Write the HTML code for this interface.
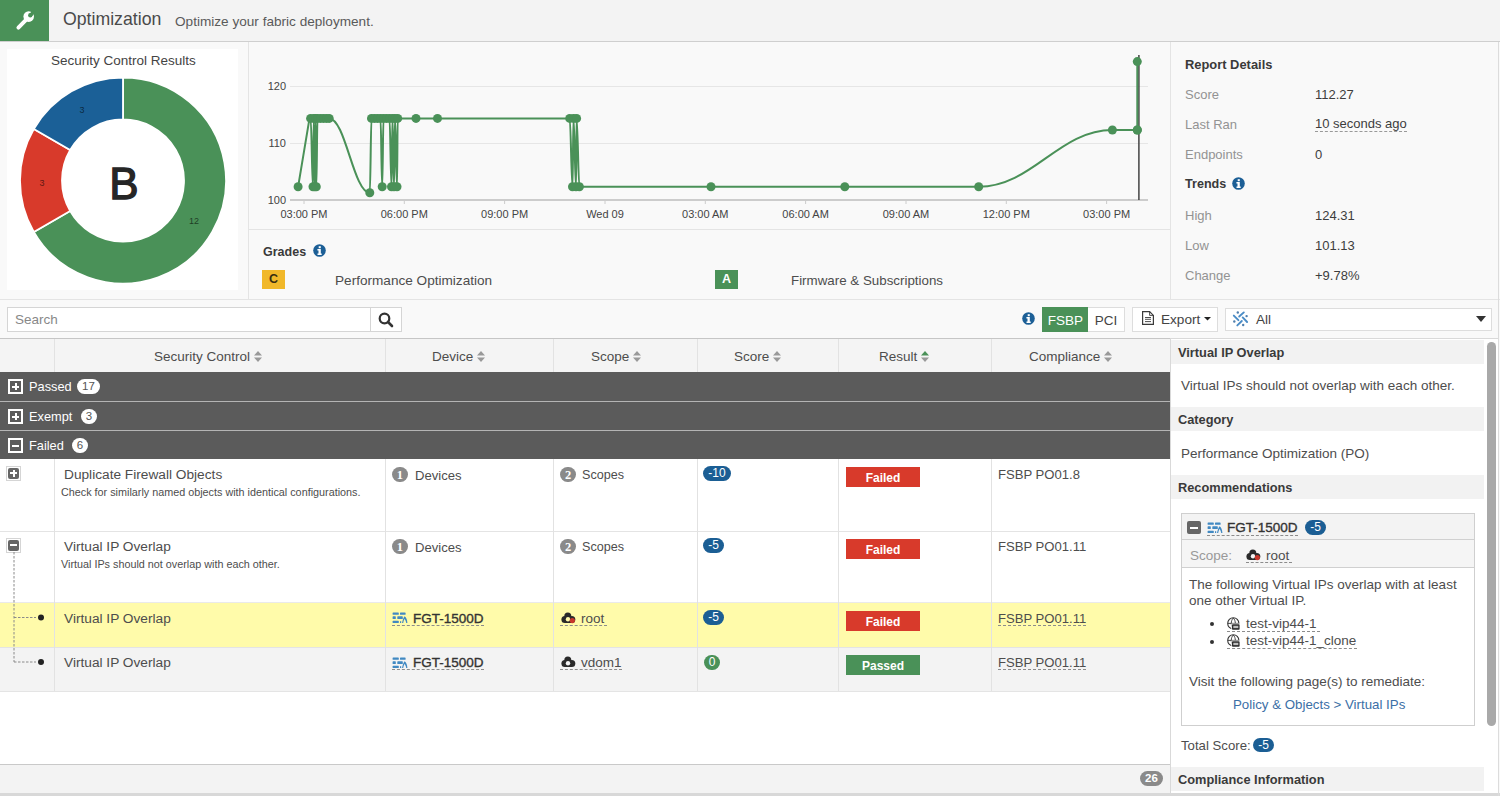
<!DOCTYPE html>
<html><head><meta charset="utf-8">
<style>
*{box-sizing:border-box;margin:0;padding:0}
html,body{width:1500px;height:796px;overflow:hidden;background:#f9f9f9;font-family:"Liberation Sans",sans-serif;color:#333}
.a{position:absolute}
#hdr{left:0;top:0;width:1500px;height:42px;background:#f3f3f3;border-bottom:1px solid #cfcfcf}
#hicon{left:0;top:0;width:49px;height:41px;background:#4a9158}
#htitle{left:63px;top:9px;font-size:17.7px;color:#4a4a4a}
#hsub{left:175px;top:14px;font-size:13.6px;color:#5a5a5a}
#donutcard{left:7px;top:49px;width:231px;height:241px;background:#fff}
#chartp{left:248px;top:42px;width:922px;height:188px;border-left:1px solid #e4e4e4;border-bottom:1px solid #e4e4e4}
#rep{left:1170px;top:42px;width:328px;height:257px;border-left:1px solid #e4e4e4}
.lbl{font-size:13px;color:#939393}
.val{font-size:13px;color:#3d3d3d}
.bold{font-weight:bold}
.info{width:13px;height:13px;border-radius:50%;background:#1b5e94;color:#fff;font-weight:bold;font-size:10px;line-height:13px;text-align:center;font-family:"Liberation Serif",serif}
.info::after{content:"i"}
.grade{width:23px;height:19px;font-size:12.5px;font-weight:bold;line-height:19px;text-align:center}
.t{font-size:13.5px;color:#4d4d4d;white-space:nowrap}
.btn{border:1px solid #ddd;background:#fff}
.sort{display:inline-block;width:8px;height:11px;vertical-align:-1px;margin-left:4px}
.grp{left:0;width:1170px;height:28px;background:#5b5b5b;color:#fff}
.gbox{position:absolute;left:8px;top:7px;width:15px;height:15px;border:2px solid #fff}
.gbox::before{content:"";position:absolute;left:2px;top:4.5px;width:7px;height:2px;background:#fff}
.gbox.p::after{content:"";position:absolute;left:4.5px;top:2px;width:2px;height:7px;background:#fff}
.gtxt{position:absolute;left:29px;top:7px;font-size:12.8px;color:#fff}
.gbadge{position:absolute;top:7px;height:15px;border-radius:8px;background:#fff;color:#555;font-size:11.5px;line-height:15px;text-align:center}
.vl{width:1px;background:#e2e2e2}
.ebox{width:15px;height:15px;border:1px solid #d5d5d5;background:#fff}
.ebox::before{content:"";position:absolute;left:1px;top:1px;width:11px;height:11px;background:#666;border-radius:2px}
.ebox i{position:absolute;left:3px;top:5.2px;width:7px;height:2.2px;background:#fff}
.ebox b{position:absolute;left:5.5px;top:3px;width:2.2px;height:7px;background:#fff}
.circ{width:15.5px;height:15.5px;border-radius:50%;background:#8a8a8a;color:#fff;font-size:12.5px;font-weight:bold;font-family:"Liberation Serif",serif;line-height:16.5px;text-align:center}
.pill{height:15px;border-radius:7.5px;background:#1b5e94;color:#fff;font-size:12px;line-height:15px;text-align:center}
.res{width:74px;height:20px;color:#fff;font-size:12px;font-weight:bold;line-height:23px;text-align:center}
.dash{border-bottom:1px dashed #8c8c8c}
.sh{position:absolute;left:1171px;width:313px;height:24px;background:#f2f2f2;font-size:12.8px;font-weight:bold;color:#3a3a3a;padding-left:7px;padding-top:1px;line-height:24px}
</style></head>
<body>
<div id="hdr" class="a"></div>
<div id="hicon" class="a"></div>
<div id="htitle" class="a">Optimization</div>
<div id="hsub" class="a">Optimize your fabric deployment.</div>
<div id="donutcard" class="a"></div>
<svg class="a" style="left:0;top:0" width="250" height="300" viewBox="0 0 250 300">
<path fill="#4a9158" stroke="#fff" stroke-width="1.8" d="M123.00,77.50 A103,103 0 1 1 33.80,232.00 L70.17,211.00 A61,61 0 1 0 123.00,119.50 Z"/>
<path fill="#d83a2b" stroke="#fff" stroke-width="1.8" d="M33.80,232.00 A103,103 0 0 1 33.80,129.00 L70.17,150.00 A61,61 0 0 0 70.17,211.00 Z"/>
<path fill="#1b6097" stroke="#fff" stroke-width="1.8" d="M33.80,129.00 A103,103 0 0 1 123.00,77.50 L123.00,119.50 A61,61 0 0 0 70.17,150.00 Z"/>
<text x="82" y="113" font-size="9" fill="rgba(0,0,0,0.6)" text-anchor="middle">3</text>
<text x="42" y="186" font-size="9" fill="rgba(0,0,0,0.6)" text-anchor="middle">3</text>
<text x="194" y="224" font-size="9" fill="rgba(0,0,0,0.6)" text-anchor="middle">12</text>
<text x="124" y="198.6" font-size="44" fill="#262626" stroke="#262626" stroke-width="1.3" text-anchor="middle">B</text>
</svg>
<div id="chartp" class="a"></div>
<svg class="a" style="left:0;top:0" width="1170" height="230" viewBox="0 0 1170 230">
<g stroke="#e6e6e6" stroke-width="1">
<line x1="290" y1="86.5" x2="1148" y2="86.5"/><line x1="290" y1="143.5" x2="1148" y2="143.5"/>
</g>
<line x1="290" y1="200" x2="1148" y2="200" stroke="#ccc" stroke-width="2"/>
<g stroke="#ccc" stroke-width="1">
<line x1="304" y1="200" x2="304" y2="204"/><line x1="404.3" y1="200" x2="404.3" y2="204"/><line x1="504.6" y1="200" x2="504.6" y2="204"/><line x1="605" y1="200" x2="605" y2="204"/><line x1="705.3" y1="200" x2="705.3" y2="204"/><line x1="805.6" y1="200" x2="805.6" y2="204"/><line x1="906" y1="200" x2="906" y2="204"/><line x1="1006.3" y1="200" x2="1006.3" y2="204"/><line x1="1106.6" y1="200" x2="1106.6" y2="204"/>
</g>
<g font-size="11" fill="#444" text-anchor="end">
<text x="286" y="90">120</text><text x="286" y="147">110</text><text x="286" y="204">100</text>
</g>
<g font-size="11" fill="#444" text-anchor="middle">
<text x="304" y="218">03:00 PM</text><text x="404.3" y="218">06:00 PM</text><text x="504.6" y="218">09:00 PM</text><text x="605" y="218">Wed 09</text><text x="705.3" y="218">03:00 AM</text><text x="805.6" y="218">06:00 AM</text><text x="906" y="218">09:00 AM</text><text x="1006.3" y="218">12:00 PM</text><text x="1106.6" y="218">03:00 PM</text>
</g>
<line x1="1138.9" y1="55" x2="1138.9" y2="200" stroke="#444" stroke-width="1.5"/>
<path fill="none" stroke="#4a9158" stroke-width="2" d="M298.1,186.8 L309.5,118.4 L310.6,118.4 C311.6,118.4 312.0,186.8 313.0,186.8 C313.3,186.8 313.5,118.4 313.8,118.4 C314.2,118.4 314.4,186.8 314.8,186.8 C315.1,186.8 315.3,118.4 315.6,118.4 C315.9,118.4 316.0,186.8 316.3,186.8 C316.8,186.8 317.0,118.4 317.5,118.4 C318.7,118.4 319.3,118.4 320.5,118.4 C321.7,118.4 322.3,118.4 323.5,118.4 C324.7,118.4 325.3,118.4 326.5,118.4 C327.6,118.4 328.1,118.4 329.2,118.4 C345.4,118.4 353.6,192.8 369.8,192.8 C370.5,192.8 370.8,118.4 371.5,118.4 C372.7,118.4 373.3,118.4 374.5,118.4 C375.7,118.4 376.3,118.4 377.5,118.4 C378.7,118.4 379.3,118.4 380.5,118.4 C381.2,118.4 381.5,186.8 382.2,186.8 C382.7,186.8 383.0,118.4 383.5,118.4 C384.7,118.4 385.3,118.4 386.5,118.4 C387.7,118.4 388.3,118.4 389.5,118.4 C390.3,118.4 390.7,186.8 391.5,186.8 C391.9,186.8 392.1,118.4 392.5,118.4 C393.1,118.4 393.4,186.8 394.0,186.8 C394.4,186.8 394.6,118.4 395.0,118.4 C395.8,118.4 396.2,186.8 397.0,186.8 C397.3,186.8 397.4,118.4 397.7,118.4 C405.0,118.4 408.7,118.4 416.0,118.4 C424.6,118.4 428.9,118.4 437.5,118.4 C490.4,118.4 516.8,118.4 569.7,118.4 C570.8,118.4 571.4,186.8 572.5,186.8 C572.9,186.8 573.1,118.4 573.5,118.4 C574.5,118.4 575.0,186.8 576.0,186.8 C576.2,186.8 576.4,118.4 576.6,118.4 C577.7,118.4 578.3,186.8 579.4,186.8 C632.0,186.8 658.4,186.8 711.0,186.8 C764.5,186.8 791.3,186.8 844.8,186.8 C898.4,186.8 925.1,186.8 978.7,186.8 C1032.2,186.8 1058.9,130.0 1112.4,130.0 C1122.4,130.0 1127.3,130.0 1137.3,130.0 C1137.3,130.0 1137.3,89.0 1137.3,61.6 C1137.3,89.0 1137.3,130.0 1137.3,130.0"/>
<g fill="#4a9158"><circle cx="298.1" cy="186.8" r="4.5"/><circle cx="310.6" cy="118.4" r="4.5"/><circle cx="313.0" cy="186.8" r="4.5"/><circle cx="313.8" cy="118.4" r="4.5"/><circle cx="314.8" cy="186.8" r="4.5"/><circle cx="315.6" cy="118.4" r="4.5"/><circle cx="316.3" cy="186.8" r="4.5"/><circle cx="317.5" cy="118.4" r="4.5"/><circle cx="320.5" cy="118.4" r="4.5"/><circle cx="323.5" cy="118.4" r="4.5"/><circle cx="326.5" cy="118.4" r="4.5"/><circle cx="329.2" cy="118.4" r="4.5"/><circle cx="369.8" cy="192.8" r="4.5"/><circle cx="371.5" cy="118.4" r="4.5"/><circle cx="374.5" cy="118.4" r="4.5"/><circle cx="377.5" cy="118.4" r="4.5"/><circle cx="380.5" cy="118.4" r="4.5"/><circle cx="382.2" cy="186.8" r="4.5"/><circle cx="383.5" cy="118.4" r="4.5"/><circle cx="386.5" cy="118.4" r="4.5"/><circle cx="389.5" cy="118.4" r="4.5"/><circle cx="391.5" cy="186.8" r="4.5"/><circle cx="392.5" cy="118.4" r="4.5"/><circle cx="394.0" cy="186.8" r="4.5"/><circle cx="395.0" cy="118.4" r="4.5"/><circle cx="397.0" cy="186.8" r="4.5"/><circle cx="397.7" cy="118.4" r="4.5"/><circle cx="416.0" cy="118.4" r="4.5"/><circle cx="437.5" cy="118.4" r="4.5"/><circle cx="569.7" cy="118.4" r="4.5"/><circle cx="572.5" cy="186.8" r="4.5"/><circle cx="573.5" cy="118.4" r="4.5"/><circle cx="576.0" cy="186.8" r="4.5"/><circle cx="576.6" cy="118.4" r="4.5"/><circle cx="579.4" cy="186.8" r="4.5"/><circle cx="711.0" cy="186.8" r="4.5"/><circle cx="844.8" cy="186.8" r="4.5"/><circle cx="978.7" cy="186.8" r="4.5"/><circle cx="1112.4" cy="130.0" r="4.5"/><circle cx="1137.3" cy="130.0" r="4.5"/><circle cx="1137.3" cy="61.6" r="4.5"/><circle cx="1137.3" cy="130.0" r="4.5"/></g>
</svg>
<div id="rep" class="a"></div>
<svg class="a" style="left:0;top:0" width="49" height="41" viewBox="0 0 49 41"><line x1="18.4" y1="27.6" x2="26" y2="19.8" stroke="#fff" stroke-width="3.9" stroke-linecap="round"/><circle cx="28.7" cy="16.6" r="5.3" fill="#fff"/><circle cx="30.3" cy="15.2" r="2.2" fill="#4a9158"/><path d="M29.2 14.2L32.6 10.2L35.5 12.6L31.6 16.4Z" fill="#4a9158"/></svg>
<div class="a" style="left:51px;top:53px;font-size:13.5px;color:#444">Security Control Results</div>
<div class="a bold" style="left:1185px;top:57px;font-size:12.9px;color:#3a3a3a">Report Details</div>
<div class="a lbl" style="left:1185px;top:87px">Score</div><div class="a val" style="left:1315px;top:87px">112.27</div>
<div class="a lbl" style="left:1185px;top:117px">Last Ran</div><div class="a val" style="left:1315px;top:117px;border-bottom:1px dashed #999;line-height:14px">10 seconds ago</div>
<div class="a lbl" style="left:1185px;top:147px">Endpoints</div><div class="a val" style="left:1315px;top:147px">0</div>
<div class="a bold" style="left:1185px;top:177px;font-size:12.6px;color:#3a3a3a">Trends</div>
<svg class="a" style="left:1232px;top:176.5px" width="13" height="13" viewBox="0 0 13 13"><circle cx="6.5" cy="6.5" r="6.3" fill="#1c5f96"/><rect x="5.7" y="2.2" width="2.1" height="2" fill="#fff"/><path d="M4.4 5.1H7.8V9.5H8.7V10.9H4.5V9.5H5.5V6.4H4.4Z" fill="#fff"/></svg>
<div class="a lbl" style="left:1185px;top:208px">High</div><div class="a val" style="left:1315px;top:208px">124.31</div>
<div class="a lbl" style="left:1185px;top:238px">Low</div><div class="a val" style="left:1315px;top:238px">101.13</div>
<div class="a lbl" style="left:1185px;top:268px">Change</div><div class="a val" style="left:1315px;top:268px">+9.78%</div>
<div class="a" style="left:248px;top:229px;width:922px;height:70px;border-left:1px solid #e4e4e4"></div>
<div class="a bold" style="left:263px;top:245px;font-size:12.5px;color:#3a3a3a">Grades</div>
<svg class="a" style="left:312.6px;top:244px" width="13" height="13" viewBox="0 0 13 13"><circle cx="6.5" cy="6.5" r="6.3" fill="#1c5f96"/><rect x="5.7" y="2.2" width="2.1" height="2" fill="#fff"/><path d="M4.4 5.1H7.8V9.5H8.7V10.9H4.5V9.5H5.5V6.4H4.4Z" fill="#fff"/></svg>
<div class="a grade" style="left:262px;top:270px;background:#f1b82a;color:#3a2e10">C</div>
<div class="a" style="left:335px;top:273px;font-size:13.6px;color:#4d4d4d">Performance Optimization</div>
<div class="a grade" style="left:715px;top:270px;background:#4a9158;color:#fff">A</div>
<div class="a" style="left:791px;top:273px;font-size:13.35px;color:#4d4d4d">Firmware &amp; Subscriptions</div>
<div class="a" style="left:0;top:299px;width:1500px;height:1px;background:#e4e4e4"></div>


<!-- toolbar -->
<div class="a" style="left:7px;top:307px;width:364px;height:25px;background:#fff;border:1px solid #d5d5d5"></div>
<div class="a t" style="left:15px;top:312px;color:#888">Search</div>
<div class="a" style="left:370px;top:307px;width:32px;height:25px;background:#fff;border:1px solid #d5d5d5"></div>
<svg class="a" style="left:378px;top:312px" width="16" height="16" viewBox="0 0 16 16"><circle cx="6.5" cy="6.5" r="4.8" fill="none" stroke="#333" stroke-width="2.2"/><path d="M10 10L14 14" stroke="#333" stroke-width="2.6" stroke-linecap="round"/></svg>
<svg class="a" style="left:1021.5px;top:311.8px" width="13" height="13" viewBox="0 0 13 13"><circle cx="6.5" cy="6.5" r="6.3" fill="#1c5f96"/><rect x="5.7" y="2.2" width="2.1" height="2" fill="#fff"/><path d="M4.4 5.1H7.8V9.5H8.7V10.9H4.5V9.5H5.5V6.4H4.4Z" fill="#fff"/></svg>
<div class="a" style="left:1042px;top:307px;width:47px;height:25px;background:#4a9158;color:#fff;font-size:13.5px;line-height:27px;text-align:center">FSBP</div>
<div class="a" style="left:1088px;top:307px;width:37px;height:25px;background:#fff;border:1px solid #ddd;border-left:0;color:#444;font-size:13.5px;line-height:25px;text-align:center">PCI</div>
<div class="a" style="left:1132px;top:307px;width:86px;height:25px;background:#fff;border:1px solid #ddd"></div>
<svg class="a" style="left:1136px;top:306px" width="24" height="24" viewBox="0 0 24 24"><path d="M6.6 5.6H13.6L17.4 9.4V18.3H6.6Z" fill="none" stroke="#3a3a3a" stroke-width="1.2"/><path d="M13.6 5.6V9.4H17.4" fill="none" stroke="#3a3a3a" stroke-width="0.9"/><path d="M9 11.5H15M9 13.3H15M9 15.6H15" stroke="#3a3a3a" stroke-width="0.9"/></svg>
<div class="a t" style="left:1161px;top:312px;color:#444;font-size:13.6px">Export</div>
<svg class="a" style="left:1203.5px;top:317px" width="8" height="5" viewBox="0 0 8 5"><path d="M0 0H7L3.5 3.5Z" fill="#222"/></svg>
<div class="a" style="left:1225px;top:308px;width:267px;height:23px;background:#fff;border:1px solid #ddd"></div>
<svg class="a" style="left:1226px;top:306px" width="30" height="26" viewBox="0 0 30 26"><g stroke="#4a8cc6" stroke-width="1.9" stroke-linecap="round" fill="none"><path d="M7.8 9.6L12.4 14.2M13.2 10.5L17.8 6.4M16.7 11.4L21.1 16M11.3 19.4L15.8 15"/></g><g fill="#4f7fae"><circle cx="11.8" cy="6.5" r="1.2"/><circle cx="20.6" cy="10.1" r="1.2"/><circle cx="8.3" cy="15.5" r="1.2"/><circle cx="17.2" cy="19" r="1.2"/></g></svg>
<div class="a t" style="left:1256px;top:312px;color:#444">All</div>
<svg class="a" style="left:1476px;top:316px" width="10" height="6" viewBox="0 0 10 6"><path d="M0 0H10L5 6Z" fill="#333"/></svg>

<!-- table -->
<div class="a" style="left:0;top:338px;width:1170px;height:34px;background:#f4f4f4;border-top:1px solid #c6c6c6"></div>
<div class="a vl" style="left:54px;top:339px;height:33px"></div>
<div class="a vl" style="left:385px;top:339px;height:33px"></div>
<div class="a vl" style="left:553px;top:339px;height:33px"></div>
<div class="a vl" style="left:697px;top:339px;height:33px"></div>
<div class="a vl" style="left:838px;top:339px;height:33px"></div>
<div class="a vl" style="left:991px;top:339px;height:33px"></div>
<div class="a t" style="left:154px;top:349px">Security Control<svg class="sort" viewBox="0 0 8 11"><path fill="#999" d="M4 0L8 4.5H0Z M4 11L8 6.5H0Z"/></svg></div>
<div class="a t" style="left:432px;top:349px">Device<svg class="sort" viewBox="0 0 8 11"><path fill="#999" d="M4 0L8 4.5H0Z M4 11L8 6.5H0Z"/></svg></div>
<div class="a t" style="left:591px;top:349px">Scope<svg class="sort" viewBox="0 0 8 11"><path fill="#999" d="M4 0L8 4.5H0Z M4 11L8 6.5H0Z"/></svg></div>
<div class="a t" style="left:734px;top:349px">Score<svg class="sort" viewBox="0 0 8 11"><path fill="#999" d="M4 0L8 4.5H0Z M4 11L8 6.5H0Z"/></svg></div>
<div class="a t" style="left:879px;top:349px">Result<svg class="sort" viewBox="0 0 8 11"><path fill="#4a9158" d="M4 0L8 4.5H0Z"/><path fill="#999" d="M4 11L8 6.5H0Z"/></svg></div>
<div class="a t" style="left:1029px;top:349px">Compliance<svg class="sort" viewBox="0 0 8 11"><path fill="#999" d="M4 0L8 4.5H0Z M4 11L8 6.5H0Z"/></svg></div>

<div class="a grp" style="top:372px;height:29px"><div class="gbox p"></div><div class="gtxt">Passed</div><div class="gbadge" style="left:77px;width:23px">17</div></div>
<div class="a" style="left:0;top:401px;width:1170px;height:1px;background:#b4b4b4"></div>
<div class="a grp" style="top:402px"><div class="gbox p"></div><div class="gtxt">Exempt</div><div class="gbadge" style="left:81px;width:16px">3</div></div>
<div class="a" style="left:0;top:430px;width:1170px;height:1px;background:#b4b4b4"></div>
<div class="a grp" style="top:431px"><div class="gbox"></div><div class="gtxt">Failed</div><div class="gbadge" style="left:72px;width:16px">6</div></div>

<!-- rows -->
<div class="a" style="left:0;top:459px;width:1170px;height:305px;background:#fff"></div>
<div class="a" style="left:0;top:602px;width:1170px;height:45px;background:#fffbaa"></div>
<div class="a" style="left:0;top:647px;width:1170px;height:44px;background:#f3f3f3"></div>
<div class="a" style="left:0;top:531px;width:1170px;height:1px;background:#e4e4e4"></div>
<div class="a" style="left:0;top:602px;width:1170px;height:1px;background:#eaeaea"></div>
<div class="a" style="left:0;top:647px;width:1170px;height:1px;background:#e4e4e4"></div>
<div class="a" style="left:0;top:691px;width:1170px;height:1px;background:#e4e4e4"></div>
<div class="a vl" style="left:54px;top:459px;height:232px"></div>
<div class="a vl" style="left:385px;top:459px;height:232px"></div>
<div class="a vl" style="left:553px;top:459px;height:232px"></div>
<div class="a vl" style="left:697px;top:459px;height:232px"></div>
<div class="a vl" style="left:838px;top:459px;height:232px"></div>
<div class="a vl" style="left:991px;top:459px;height:232px"></div>

<div class="a ebox" style="left:6px;top:466px"><i></i><b></b></div>
<div class="a t" style="left:64px;top:467px;font-size:13.7px">Duplicate Firewall Objects</div>
<div class="a t" style="left:61px;top:486px;font-size:10.8px">Check for similarly named objects with identical configurations.</div>
<div class="a circ" style="left:392px;top:466.8px">1</div><div class="a t" style="left:415px;top:468px;font-size:13.1px">Devices</div>
<div class="a circ" style="left:560.3px;top:466.8px">2</div><div class="a t" style="left:582px;top:468px;font-size:12.6px">Scopes</div>
<div class="a pill" style="left:703px;top:466px;width:28px">-10</div>
<div class="a res" style="left:846px;top:467px;background:#d83a2b">Failed</div>
<div class="a t" style="left:998px;top:467px;font-size:13.1px">FSBP PO01.8</div>

<div class="a ebox" style="left:6px;top:538px"><i></i></div>
<div class="a t" style="left:64px;top:539px;font-size:13.7px">Virtual IP Overlap</div>
<div class="a t" style="left:61px;top:558px;font-size:10.8px">Virtual IPs should not overlap with each other.</div>
<div class="a circ" style="left:392px;top:538.8px">1</div><div class="a t" style="left:415px;top:540px;font-size:13.1px">Devices</div>
<div class="a circ" style="left:560.3px;top:538.8px">2</div><div class="a t" style="left:582px;top:540px;font-size:12.6px">Scopes</div>
<div class="a pill" style="left:703px;top:538px;width:21px">-5</div>
<div class="a res" style="left:846px;top:539px;background:#d83a2b">Failed</div>
<div class="a t" style="left:998px;top:539px;font-size:13.1px">FSBP PO01.11</div>

<svg class="a" style="left:0;top:552px" width="54" height="115" viewBox="0 0 54 115"><g stroke="#8a8a8a" stroke-width="1" stroke-dasharray="2.5 1.5" fill="none"><path d="M14 0V110M14 65.5H36M14 110H36"/></g><circle cx="41" cy="65.5" r="3" fill="#222"/><circle cx="41" cy="110" r="3" fill="#222"/></svg>
<div class="a t" style="left:64px;top:611px;font-size:13.7px">Virtual IP Overlap</div>
<svg class="a fw" style="left:392px;top:612px" width="16" height="12" viewBox="0 0 16 12"><g fill="#4189c2"><rect x="0.6" y="0.4" width="6.2" height="2.4" rx="0.6"/><rect x="8" y="0.4" width="5.6" height="2.4" rx="0.6"/><rect x="0.6" y="4.3" width="3.2" height="2.7" rx="0.6"/><rect x="5.3" y="4.3" width="5.5" height="2.7" rx="0.6"/><rect x="0.6" y="8.8" width="6.2" height="2.3" rx="0.6"/><rect x="8" y="9.2" width="1.2" height="1.8"/><path d="M10 10.9C10.6 8.2 11.4 5.8 12.6 4.3C14.2 5 15.2 7.8 15.4 10.9H14.2C13.8 8.8 13.2 7.6 12.4 7C11.8 8.2 11.4 9.6 11.2 10.9Z"/></g></svg>
<div class="a t dash" style="left:392px;top:611px;width:92px;height:15px"></div>
<div class="a t" style="left:413px;top:611px;color:#333;font-size:13.5px;-webkit-text-stroke:0.35px #333">FGT-1500D</div>
<svg class="a" style="left:561px;top:612px" width="16" height="12" viewBox="0 0 16 12"><g fill="#2a2a2a"><circle cx="6.8" cy="4" r="3.5"/><circle cx="3.9" cy="7.5" r="3.5"/><circle cx="10.8" cy="7.4" r="3.5"/><rect x="3.9" y="7" width="6.9" height="4"/></g><circle cx="7" cy="7.3" r="2.2" fill="#fffbaa"/><circle cx="11.3" cy="8.6" r="2.6" fill="#c8372c"/></svg>
<div class="a t dash" style="left:560px;top:611px;width:47px;height:15px"></div>
<div class="a t" style="left:581px;top:611px">root</div>
<div class="a pill" style="left:703px;top:610px;width:21px">-5</div>
<div class="a res" style="left:846px;top:611px;background:#d83a2b">Failed</div>
<div class="a t dash" style="left:998px;top:611px;height:15px;font-size:13.1px">FSBP PO01.11</div>

<div class="a t" style="left:64px;top:655px;font-size:13.7px">Virtual IP Overlap</div>
<svg class="a fw" style="left:392px;top:657px" width="16" height="12" viewBox="0 0 16 12"><g fill="#4189c2"><rect x="0.6" y="0.4" width="6.2" height="2.4" rx="0.6"/><rect x="8" y="0.4" width="5.6" height="2.4" rx="0.6"/><rect x="0.6" y="4.3" width="3.2" height="2.7" rx="0.6"/><rect x="5.3" y="4.3" width="5.5" height="2.7" rx="0.6"/><rect x="0.6" y="8.8" width="6.2" height="2.3" rx="0.6"/><rect x="8" y="9.2" width="1.2" height="1.8"/><path d="M10 10.9C10.6 8.2 11.4 5.8 12.6 4.3C14.2 5 15.2 7.8 15.4 10.9H14.2C13.8 8.8 13.2 7.6 12.4 7C11.8 8.2 11.4 9.6 11.2 10.9Z"/></g></svg>
<div class="a t dash" style="left:392px;top:655px;width:92px;height:15px"></div>
<div class="a t" style="left:413px;top:655px;color:#333;font-size:13.5px;-webkit-text-stroke:0.35px #333">FGT-1500D</div>
<svg class="a" style="left:561px;top:656px" width="16" height="12" viewBox="0 0 16 12"><g fill="#2a2a2a"><circle cx="6.8" cy="4" r="3.5"/><circle cx="3.9" cy="7.5" r="3.5"/><circle cx="10.8" cy="7.4" r="3.5"/><rect x="3.9" y="7" width="6.9" height="4"/></g><circle cx="7" cy="7.3" r="2.2" fill="#f3f3f3"/></svg>
<div class="a t dash" style="left:560px;top:655px;width:62px;height:15px"></div>
<div class="a t" style="left:581px;top:655px">vdom1</div>
<div class="a pill" style="left:704px;top:655px;width:16px;background:#4a9158">0</div>
<div class="a res" style="left:846px;top:655px;background:#4a9158">Passed</div>
<div class="a t dash" style="left:998px;top:655px;height:15px;font-size:13.1px">FSBP PO01.11</div>

<!-- footer -->
<div class="a" style="left:0;top:764px;width:1170px;height:30px;background:#f3f3f3;border-top:1px solid #c9c9c9"></div>
<div class="a" style="left:0;top:793px;width:1500px;height:3px;background:#d8d8d8"></div>
<div class="a pill" style="left:1140px;top:771px;width:23px;height:15px;border-radius:8px;background:#8a8a8a;line-height:15px;font-weight:bold;font-size:11.5px">26</div>

<!-- right panel -->
<div class="a" style="left:1170px;top:338px;width:328px;height:455px;background:#fff;border-left:1px solid #d9d9d9;border-top:1px solid #d9d9d9"></div>
<div class="a" style="left:1487px;top:342px;width:9px;height:384px;border-radius:5px;background:#a9a9a9"></div>
<div class="sh" style="top:340px">Virtual IP Overlap</div>
<div class="a t" style="left:1181px;top:378px">Virtual IPs should not overlap with each other.</div>
<div class="sh" style="top:407px">Category</div>
<div class="a t" style="left:1181px;top:446px">Performance Optimization (PO)</div>
<div class="sh" style="top:475px">Recommendations</div>
<div class="a" style="left:1181px;top:513px;width:294px;height:213px;border:1px solid #cfcfcf"></div>
<div class="a" style="left:1182px;top:514px;width:292px;height:26px;background:#f3f3f3;border-bottom:1px solid #d0d0d0"></div>
<div class="a" style="left:1182px;top:540px;width:292px;height:28px;background:#f5f5f5;border-bottom:1px solid #d0d0d0"></div>
<div class="a" style="left:1187px;top:521px;width:14px;height:13px;background:#666;border-radius:2px"><div class="a" style="left:3px;top:5.5px;width:8px;height:2px;background:#fff"></div></div>
<svg class="a" style="left:1207px;top:522px" width="16" height="12" viewBox="0 0 16 12"><g fill="#4189c2"><rect x="0.6" y="0.4" width="6.2" height="2.4" rx="0.6"/><rect x="8" y="0.4" width="5.6" height="2.4" rx="0.6"/><rect x="0.6" y="4.3" width="3.2" height="2.7" rx="0.6"/><rect x="5.3" y="4.3" width="5.5" height="2.7" rx="0.6"/><rect x="0.6" y="8.8" width="6.2" height="2.3" rx="0.6"/><rect x="8" y="9.2" width="1.2" height="1.8"/><path d="M10 10.9C10.6 8.2 11.4 5.8 12.6 4.3C14.2 5 15.2 7.8 15.4 10.9H14.2C13.8 8.8 13.2 7.6 12.4 7C11.8 8.2 11.4 9.6 11.2 10.9Z"/></g></svg>
<div class="a dash" style="left:1207px;top:520px;width:91px;height:16px"></div>
<div class="a t" style="left:1227px;top:524px;font-weight:bold;font-size:13.4px;color:#333;line-height:10px"></div>
<div class="a t" style="left:1227px;top:520px;font-size:13.5px;color:#333;-webkit-text-stroke:0.35px #333">FGT-1500D</div>
<div class="a pill" style="left:1305px;top:520px;width:21px">-5</div>
<div class="a t" style="left:1190px;top:548px;color:#999">Scope:</div>
<svg class="a" style="left:1246px;top:549px" width="16" height="12" viewBox="0 0 16 12"><g fill="#2a2a2a"><circle cx="6.8" cy="4" r="3.5"/><circle cx="3.9" cy="7.5" r="3.5"/><circle cx="10.8" cy="7.4" r="3.5"/><rect x="3.9" y="7" width="6.9" height="4"/></g><circle cx="7" cy="7.3" r="2.2" fill="#f5f5f5"/><circle cx="11.3" cy="8.6" r="2.6" fill="#c8372c"/></svg>
<div class="a dash" style="left:1246px;top:547px;width:46px;height:16px"></div>
<div class="a t" style="left:1266px;top:548px">root</div>
<div class="a t" style="left:1189px;top:577px;line-height:16px">The following Virtual IPs overlap with at least<br>one other Virtual IP.</div>
<div class="a" style="left:1210px;top:622px;width:4px;height:4px;border-radius:50%;background:#333"></div>
<div class="a" style="left:1210px;top:640px;width:4px;height:4px;border-radius:50%;background:#333"></div>
<svg class="a" style="left:1227px;top:617px" width="14" height="14" viewBox="0 0 14 14"><circle cx="6.3" cy="6.4" r="5.6" fill="none" stroke="#333" stroke-width="1.1"/><path d="M1 6.4H11.6M6.3 1C3.6 3.6 3.6 9.2 6.3 11.8M6.3 1C9 3.6 9 9.2 6.3 11.8" fill="none" stroke="#333" stroke-width="0.9"/><rect x="4.3" y="6.6" width="9" height="6.6" fill="#fff"/><rect x="5" y="7.3" width="7.6" height="5.5" rx="0.8" fill="#2e2e2e"/><rect x="6.3" y="8.8" width="5" height="2.3" fill="#bdbdbd"/></svg><svg class="a" style="left:1227px;top:634px" width="14" height="14" viewBox="0 0 14 14"><circle cx="6.3" cy="6.4" r="5.6" fill="none" stroke="#333" stroke-width="1.1"/><path d="M1 6.4H11.6M6.3 1C3.6 3.6 3.6 9.2 6.3 11.8M6.3 1C9 3.6 9 9.2 6.3 11.8" fill="none" stroke="#333" stroke-width="0.9"/><rect x="4.3" y="6.6" width="9" height="6.6" fill="#fff"/><rect x="5" y="7.3" width="7.6" height="5.5" rx="0.8" fill="#2e2e2e"/><rect x="6.3" y="8.8" width="5" height="2.3" fill="#bdbdbd"/></svg>
<div class="a dash" style="left:1227px;top:616px;width:93px;height:16px"></div>
<div class="a dash" style="left:1227px;top:633px;width:130px;height:16px"></div>
<div class="a t" style="left:1246px;top:616px">test-vip44-1</div>
<div class="a t" style="left:1246px;top:633px">test-vip44-1_clone</div>
<div class="a t" style="left:1189px;top:674px">Visit the following page(s) to remediate:</div>
<div class="a t" style="left:1233px;top:697px;color:#3b6fa6;font-size:13.3px">Policy &amp; Objects &gt; Virtual IPs</div>
<div class="a t" style="left:1181px;top:738px;font-size:13.2px">Total Score:</div>
<div class="a pill" style="left:1253px;top:738px;width:21px;height:14px;line-height:14px">-5</div>
<div class="sh" style="top:767px;height:24px">Compliance Information</div>
<div class="a" style="left:1498px;top:42px;width:1px;height:754px;background:#dcdcdc"></div>
</body></html>
